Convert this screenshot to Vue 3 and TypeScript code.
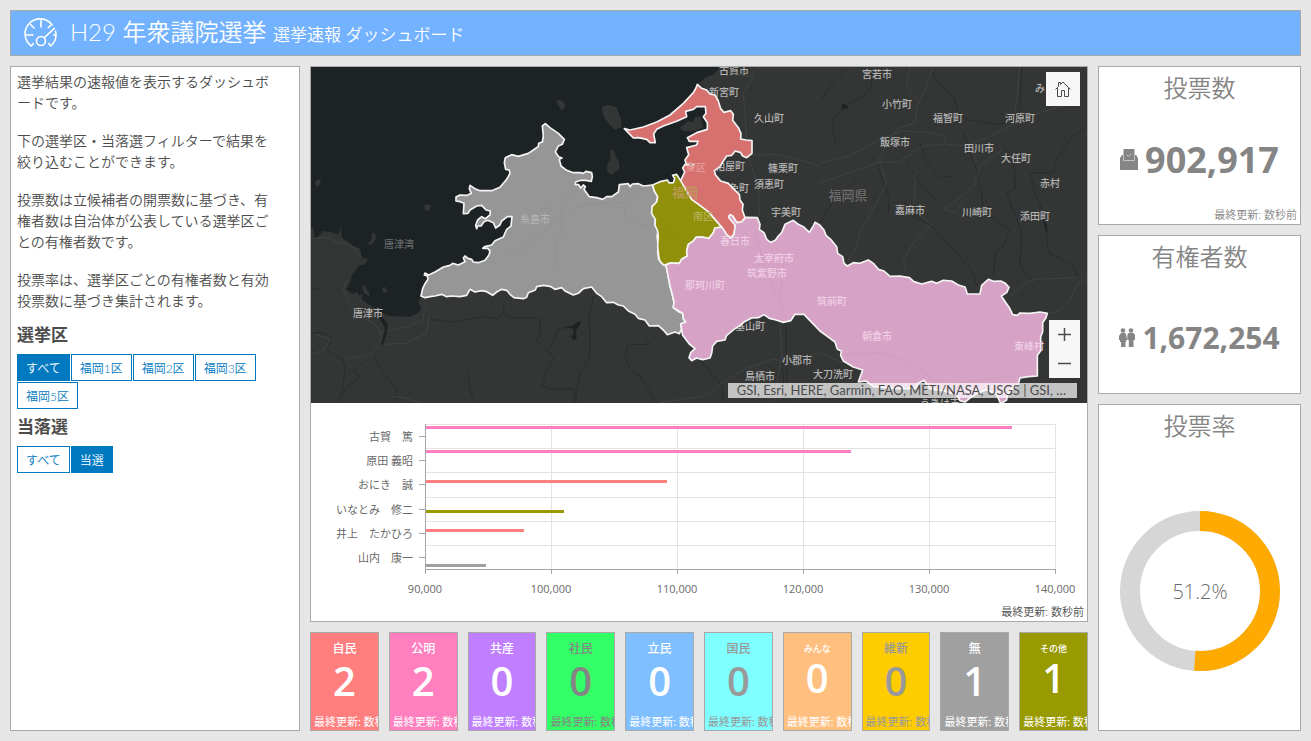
<script setup lang="ts">
import { computed, ref } from 'vue'

interface Candidate { name: string; y: number; barY: number; end: number; color: string }
interface Party { name: string; seats: number; bg: string; fg: string; small?: boolean }
interface Place { name: string; x: number; y: number; kind?: string }

const intro: string[] = [
  '選挙結果の速報値を表示するダッシュボードです。',
  '下の選挙区・当落選フィルターで結果を絞り込むことができます。',
  '投票数は立候補者の開票数に基づき、有権者数は自治体が公表している選挙区ごとの有権者数です。',
  '投票率は、選挙区ごとの有権者数と有効投票数に基づき集計されます。',
]

const districts = ['すべて', '福岡1区', '福岡2区', '福岡3区', '福岡5区']
const results = ['すべて', '当選']
const district = ref('すべて')
const result = ref('当選')
const updated = '最終更新: 数秒前'

const turnout = ref(51.2)
const turnoutDash = computed(() => `${turnout.value} 100`)

const candidates: Candidate[] = [
  { name: '古賀　篤', y: 33, barY: 23, end: 701, color: '#ff7fbf' },
  { name: '原田 義昭', y: 57, barY: 47, end: 540, color: '#ff7fbf' },
  { name: 'おにき　誠', y: 81, barY: 77, end: 356, color: '#ff7f7f' },
  { name: 'いなとみ　修二', y: 106, barY: 107, end: 253, color: '#999900' },
  { name: '井上　たかひろ', y: 130, barY: 126, end: 213, color: '#ff7f7f' },
  { name: '山内　康一', y: 154, barY: 161, end: 175, color: '#a0a0a0' },
]
const rowLines = [21, 45, 69, 94, 118, 142]
const ticks = [
  { x: 114, label: '90,000' },
  { x: 240, label: '100,000' },
  { x: 366, label: '110,000' },
  { x: 492, label: '120,000' },
  { x: 618, label: '130,000' },
  { x: 744, label: '140,000' },
]

const parties: Party[] = [
  { name: '自民', seats: 2, bg: '#ff7f7f', fg: '#ffffff' },
  { name: '公明', seats: 2, bg: '#ff7fbf', fg: '#ffffff' },
  { name: '共産', seats: 0, bg: '#bf7fff', fg: '#ffffff' },
  { name: '社民', seats: 0, bg: '#33ff66', fg: '#858585' },
  { name: '立民', seats: 0, bg: '#7fbfff', fg: '#ffffff' },
  { name: '国民', seats: 0, bg: '#7fffff', fg: '#999999' },
  { name: 'みんな', seats: 0, bg: '#ffbf7f', fg: '#ffffff', small: true },
  { name: '維新', seats: 0, bg: '#ffcc00', fg: '#999999' },
  { name: '無', seats: 1, bg: '#a0a0a0', fg: '#ffffff' },
  { name: 'その他', seats: 1, bg: '#999900', fg: '#ffffff', small: true },
]

const places: Place[] = [
  { name: '糸島市', x: 224, y: 152, kind: 'on-gray' },
  { name: '唐津湾', x: 88, y: 177, kind: 'dim' },
  { name: '唐津市', x: 57, y: 246 },
  { name: '古賀市', x: 423, y: 3 },
  { name: '新宮町', x: 413, y: 25 },
  { name: '久山町', x: 458, y: 51 },
  { name: '粕屋町', x: 419, y: 99 },
  { name: '篠栗町', x: 472, y: 101 },
  { name: '須恵町', x: 458, y: 117 },
  { name: '志免町', x: 423, y: 121 },
  { name: '宇美町', x: 475, y: 145 },
  { name: '宮若市', x: 566, y: 7 },
  { name: '小竹町', x: 586, y: 37 },
  { name: '福智町', x: 637, y: 51 },
  { name: '河原町', x: 709, y: 51 },
  { name: 'み', x: 729, y: 21 },
  { name: '飯塚市', x: 584, y: 75 },
  { name: '田川市', x: 668, y: 81 },
  { name: '大任町', x: 705, y: 91 },
  { name: '赤村', x: 739, y: 116 },
  { name: '福岡県', x: 537, y: 128, kind: 'pref' },
  { name: '嘉麻市', x: 599, y: 143 },
  { name: '川崎町', x: 666, y: 145 },
  { name: '添田町', x: 724, y: 149 },
  { name: '基山町', x: 439, y: 259 },
  { name: '小郡市', x: 486, y: 293 },
  { name: '鳥栖市', x: 449, y: 309 },
  { name: '大刀洗町', x: 522, y: 307 },
  { name: 'うきは市', x: 629, y: 336 },
]
const overlaid: Place[] = [
  { name: '東区', x: 385, y: 100, kind: 'on-red' },
  { name: '福岡', x: 374, y: 125, kind: 'city' },
  { name: '南区', x: 392, y: 149, kind: 'on-olive' },
  { name: '春日市', x: 424, y: 174, kind: 'on-pink' },
  { name: '太宰府市', x: 463, y: 191, kind: 'on-pink' },
  { name: '筑紫野市', x: 456, y: 206, kind: 'on-pink' },
  { name: '那珂川町', x: 394, y: 218, kind: 'on-pink' },
  { name: '筑前町', x: 521, y: 234, kind: 'on-pink' },
  { name: '朝倉市', x: 566, y: 269, kind: 'on-pink' },
  { name: '東峰村', x: 718, y: 279, kind: 'on-pink' },
]

const land =
  'M0 488L10 485 15 520 40 495 60 498 85 505 93 483 96 515 130 540 150 548 155 575 175 580 165 595 145 600 125 630 120 650 108 670 130 685 140 678 150 690 160 680 155 700 175 715 215 740 235 750 300 752 325 740 335 725 325 710 333 690 700 640 900 450 1030 400 1100 370 1150 330 1200 300 1210 100 1165 55 1185 35 1210 25 1232 3H2335V1015H0Z'
const islands = [
  'M738 104L755 103 766 117 760 131 748 124Z',
  'M15 352L20 342 33 341 30 355 20 364Z',
  'M342 420L352 413 363 420 356 435 345 432Z',
  'M186 500L196 503 197 520 184 536 172 535 184 522Z',
  'M157 665L163 654 170 672 179 680 176 690 163 682Z',
  'M216 667L226 662 231 677 222 682Z',
  'M750 106L762 110 765 124 750 132Z',
  'M875 124L895 117 918 122 932 155 935 182 915 192 897 175 880 150Z',
  'M900 254L912 250 917 272 928 290 928 308 905 326 892 318 892 295 902 280Z',
  'M1110 184L1135 165 1150 168 1155 152 1172 152 1180 185 1150 196 1118 196Z',
]
const cove = 'M1192 126L1160 122 1150 130 1127 136 1130 152 1100 166 1040 190 1031 204 1036 230 1060 300 1118 306 1125 295 1130 282 1136 266 1130 245 1160 237 1132 215 1160 200 1192 190Z'
const water = [
  'M205 745L225 762 234 775 230 805 218 838 212 835 224 795 220 775 206 757Z',
  'M765 783L787 780 802 768 815 766 808 780 800 790 798 798 800 818 790 823 782 810 790 806 790 788Z',
  'M1594 120L1600 112 1616 122 1608 130 1604 122 1598 134Z',
  'M2199 462L2210 475 2214 500 2206 490Z',
]
const regions = [
  {
    fill: '#969696',
    d: 'M333 690L338 668 344 655 354 640 352 630 343 627 345 621 356 627 375 618 400 603 420 598 428 592 445 597 465 587 460 576 465 570 474 577 485 580 490 588 505 590 525 583 537 567 540 555 533 547 518 547 524 542 545 537 555 524 580 513 590 490 603 480 606 452 592 452 575 465 570 477 557 486 550 470 533 463 522 467 513 480 503 480 500 488 497 478 503 462 515 452 526 458 540 447 541 435 528 432 515 418 500 420 480 432 474 442 460 443 462 412 450 407 438 405 438 393 450 387 472 388 484 382 478 368 480 358 495 368 510 374 545 374 570 364 590 340 600 322 598 312 587 310 583 290 586 275 605 266 625 271 655 262 670 252 685 241 686 232 697 228 700 210 697 180 706 173 720 185 745 202 763 220 757 235 745 240 736 258 746 272 756 276 748 280 753 300 770 313 790 320 810 320 820 322 828 316 845 320 847 332 844 346 828 343 812 343 797 348 796 356 806 356 812 366 820 357 826 362 822 370 838 392 860 395 878 400 890 392 905 392 925 378 928 356 955 353 960 362 967 354 985 353 1000 360 1028 357 1033 375 1043 392 1040 408 1026 422 1025 442 1036 460 1035 478 1045 492 1041 510 1044 535 1043 560 1046 580 1055 592 1068 600 1075 630 1080 660 1088 690 1092 708 1090 725 1105 737 1118 742 1120 758 1127 768 1112 774 1115 788 1108 803 1095 798 1072 806 1060 792 1045 779 1018 780 1005 762 985 757 975 745 955 735 940 720 925 717 910 709 890 710 875 692 860 682 845 663 820 668 805 682 790 687 765 675 755 665 735 670 720 661 700 658 680 662 676 672 655 680 650 694 640 698 612 695 600 685 590 673 575 670 560 678 548 688 530 677 515 674 495 678 480 670 470 688 450 692 425 690 410 692 395 685 375 690 360 692 345 695Z',
  },
  {
    fill: '#91900a',
    d: 'M1028 357L1050 347 1072 342 1078 351 1090 350 1094 338 1088 328 1100 325 1108 338 1118 350 1130 375 1145 400 1170 418 1195 437 1215 460 1235 483 1215 486 1210 500 1197 517 1175 513 1158 514 1150 525 1135 535 1130 555 1132 570 1115 580 1108 592 1080 591 1062 598 1050 586 1046 570 1043 540 1045 510 1042 492 1035 478 1036 460 1025 442 1026 422 1040 408 1043 392 1033 375Z',
  },
  {
    fill: '#d77170',
    d: 'M943 188L960 192 1000 183 1040 168 1080 147 1120 112 1150 80 1158 66 1162 55 1175 67 1190 72 1200 84 1215 87 1225 105 1232 128 1242 139 1262 134 1270 145 1268 163 1285 185 1293 203 1292 219 1308 222 1326 224 1326 262 1310 275 1298 270 1292 260 1276 255 1265 268 1250 270 1240 285 1230 302 1213 314 1216 326 1232 345 1255 352 1272 370 1288 385 1290 402 1299 415 1297 432 1305 455 1295 468 1280 470 1268 450 1260 446 1256 454 1276 478 1272 505 1262 516 1250 506 1235 483 1215 460 1195 437 1170 418 1145 400 1130 375 1112 344 1124 318 1118 306 1125 295 1148 302 1152 294 1128 292 1125 282 1136 266 1130 245 1160 237 1164 226 1138 226 1132 215 1160 200 1192 190 1192 170 1180 152 1188 142 1186 122 1160 122 1150 130 1127 136 1130 152 1100 166 1060 180 1040 190 1031 204 1036 230 1020 230 1010 220 985 215 970 216Z',
  },
  {
    fill: '#d6a2c5',
    d: 'M1068 598L1080 591 1108 592 1115 580 1132 570 1130 555 1135 535 1150 525 1158 514 1175 513 1197 517 1210 500 1215 486 1235 483 1250 506 1262 516 1272 505 1276 478 1256 454 1260 446 1268 450 1280 470 1295 468 1307 454 1342 455 1350 475 1348 490 1362 500 1370 520 1382 529 1396 523 1405 510 1415 500 1425 475 1450 463 1465 475 1480 482 1498 499 1510 480 1515 469 1530 478 1542 492 1548 508 1562 520 1580 542 1583 562 1598 572 1602 592 1612 600 1630 590 1650 592 1675 582 1690 592 1705 610 1722 615 1740 631 1770 630 1798 635 1812 647 1835 654 1865 646 1880 652 1900 643 1925 645 1945 657 1965 663 1972 684 2010 684 2015 658 2035 640 2050 646 2072 645 2086 652 2097 664 2090 680 2074 690 2086 708 2098 725 2108 746 2122 748 2130 741 2160 742 2190 738 2212 742 2208 755 2198 770 2198 798 2192 812 2192 854 2182 868 2182 930 2155 932 2130 936 2125 953 2105 970 2092 985 2090 1002 2072 1013 2060 985 2030 971 2010 978 1985 992 1965 1008 1950 1004 1940 985 1900 975 1860 968 1842 943 1825 952 1815 968 1760 968 1690 962 1668 945 1645 948 1658 912 1630 903 1600 885 1592 868 1594 855 1582 850 1575 828 1560 817 1530 795 1508 772 1482 745 1455 745 1442 764 1420 769 1398 762 1378 757 1362 746 1345 755 1325 756 1302 768 1290 778 1272 790 1250 808 1245 822 1220 826 1208 840 1205 862 1200 876 1178 881 1160 876 1145 884 1137 875 1142 860 1155 848 1138 834 1118 808 1112 774 1127 768 1120 758 1118 742 1090 725 1092 708 1088 690 1080 660Z',
  },
]
const darkRoads = [
  'M333 700L355 730 365 760 415 768 450 765 520 752 560 757 580 742 583 710M580 742L610 755 690 757 690 800 680 825 733 875 710 915 695 960 730 970 790 968 800 1010',
  'M10 667L40 673M3 800L40 800 65 815 50 850 95 880 105 900 100 960 85 1010M95 985L110 965 150 930 130 915 170 880',
  'M190 865L212 910 260 970 255 1010M473 915L480 970 495 1010M733 875L715 855 745 790 775 783',
  'M850 690L845 720 835 760 840 800 840 870 810 920 795 1010M1005 815L1020 835 955 835 945 870 960 910 990 930 1015 970 1040 1010M1120 810L1170 880 1235 960 1240 1010',
  'M1530 105L1570 50 1620 3M1680 3L1685 60 1660 90 1620 110 1570 160 1570 200 1580 240M1865 20L1895 60 1930 90 1945 140 1970 160 2060 175 2090 168 2130 130 2135 3',
  'M1650 330L1610 370 1560 420 1530 470M1700 290L1735 390 1735 440M1790 290L1830 350 1875 400M1830 230L1850 290 1890 335 1930 330M1960 200L1995 300 2015 380 2020 440 2100 490 2080 540 2055 560 2050 630',
  'M2330 180L2280 220 2240 280 2230 320 2160 320 2175 380 2200 440 2210 500 2215 560 2290 600 2300 630M2080 240L2115 310 2115 370 2090 380 2135 500 2130 600 2160 640',
  'M1780 400L1800 450 1860 475 1930 550 1990 620 2000 660M1415 880L1420 930 1422 1010M1427 770L1430 890 1432 1010',
]
const lightRoads = [
  'M3 518L50 515 85 530 120 535 155 575M110 640L100 670 115 710 140 740 200 780 215 810 212 835 180 865 110 880M212 835L290 832 350 800 360 740 335 700M205 800L300 780 340 760 343 720',
  'M3 865L45 850 60 820 15 805M330 1010L280 995 240 990',
  'M1332 30L1300 80 1305 150 1310 215 1320 290 1345 360 1348 450M1260 3L1290 25 1320 32 1350 3M1215 250L1290 270 1400 265 1500 290 1530 300',
  'M1535 290L1620 270 1720 215 1780 195 1860 200 1900 210 1910 235 1970 240 2030 215 2120 170 2190 140 2290 110',
  'M1530 350L1590 330 1710 288 1765 288 1840 240 1900 235M1710 288L1730 350 1695 420 1650 500 1640 540 1615 585M1870 3L1850 60 1820 120 1815 170 1760 190 1700 290M1800 3L1790 60 1820 100',
  'M1815 320L1815 380 1810 430 1865 475 1810 530 1780 580 1790 620M1960 400L1940 440 1900 430 1930 410 1990 360 2010 300 2080 250M1990 240L1995 290',
  'M2130 3L2115 140M2100 690L2150 650 2180 640 2300 635M1410 770L1415 870 1390 1010M1050 1010L1180 990 1300 910 1390 880 1450 890 1530 860 1600 890',
  'M2215 742L2250 735 2280 700 2300 660 2335 630',
]
const regionRoads = [
  'M580 565L640 545 700 500 760 440 830 415 940 410 1000 375M800 350L755 420 755 500 735 540 745 620M940 410L950 465 1100 505M690 430L720 425 730 440',
  'M1390 520L1420 600 1410 700 1430 770M1330 480L1370 620 1400 700M1530 885L1600 865 1720 860 1820 900 1890 960 2100 930',
]
</script>

<template>
  <div class="dashboard">
    <header class="banner">
      <svg class="banner-icon" viewBox="0 0 34 30" aria-hidden="true">
        <g fill="none" stroke="#fff" stroke-width="1.6" stroke-linecap="round" stroke-linejoin="round">
          <path d="M9.300 25.500L7.300 28A15 15 0 1 1 28.200 7" />
          <path d="M31.500 13.200A15 15 0 0 1 26.700 28L24.700 25.500" />
          <path d="M17 2.500V9M2.500 17H9M6.500 6.500L10 10M26.700 7.300L24.300 9.700M31.500 17H29.500" />
          <path d="M20.500 19.500L30.300 10.300" />
          <circle cx="17" cy="23" r="4.500" />
        </g>
      </svg>
      <h1>H29 年衆議院選挙 <small>選挙速報 ダッシュボード</small></h1>
    </header>

    <main class="layout">
      <aside class="panel sidebar">
        <p v-for="p in intro" :key="p">{{ p }}</p>
        <h2 id="district-label">選挙区</h2>
        <div class="choices" role="group" aria-labelledby="district-label">
          <button
            v-for="d in districts"
            :key="d"
            type="button"
            :class="{ active: d === district }"
            :aria-pressed="d === district"
            @click="district = d"
          >{{ d }}</button>
        </div>
        <h2 id="result-label">当落選</h2>
        <div class="choices" role="group" aria-labelledby="result-label">
          <button
            v-for="r in results"
            :key="r"
            type="button"
            :class="{ active: r === result }"
            :aria-pressed="r === result"
            @click="result = r"
          >{{ r }}</button>
        </div>
      </aside>

      <section class="center">
        <div class="panel visual">
          <div class="map">
            <svg class="map-canvas" viewBox="0 0 776 336" preserveAspectRatio="xMidYMid slice" role="img" aria-label="福岡県の選挙区">
              <rect width="776" height="336" fill="#1d2225" />
              <g transform="scale(.333333) translate(-3 -3)">
                <path :d="land" fill="#343635" />
                <path v-for="d in darkRoads" :key="d" :d="d" class="road dark" />
                <path v-for="d in lightRoads" :key="d" :d="d" class="road light" />
                <path :d="cove" fill="#1d2225" />
                <path v-for="d in islands" :key="d" :d="d" fill="#343635" />
                <path v-for="d in water" :key="d" :d="d" fill="#1d2225" />
              </g>
              <g class="places">
                <text v-for="p in places.slice(3)" :key="p.name" :x="p.x" :y="p.y" :class="p.kind">{{ p.name }}</text>
              </g>
              <g transform="scale(.333333) translate(-3 -3)">
                <path v-for="r in regions" :key="r.fill" :d="r.d" :fill="r.fill" stroke="#f4f4f4" stroke-width="5" stroke-linejoin="round" />
                <path v-for="d in regionRoads" :key="d" :d="d" class="road faint" />
              </g>
              <g class="places">
                <text v-for="p in places.slice(0, 3)" :key="p.name" :x="p.x" :y="p.y" :class="p.kind">{{ p.name }}</text>
                <text v-for="p in overlaid" :key="p.name" :x="p.x" :y="p.y" :class="p.kind">{{ p.name }}</text>
              </g>
            </svg>
            <button type="button" class="map-button home" aria-label="ホーム">
              <svg viewBox="0 0 16 16" aria-hidden="true">
                <path d="M.5 8.500L3.500 5.500V1.500H5.500V3.500L8 1 15.500 8.500M2.500 7V15.500H6.500V9.500H9.500V15.500H13.500V7" fill="none" stroke="#4c4c4c" />
              </svg>
            </button>
            <div class="zoom">
              <button type="button" class="map-button" aria-label="拡大">
                <svg viewBox="0 0 13 13" aria-hidden="true"><path d="M0 6.500H13M6.500 0V13" stroke="#4c4c4c" stroke-width="1.500" /></svg>
              </button>
              <button type="button" class="map-button" aria-label="縮小">
                <svg viewBox="0 0 13 13" aria-hidden="true"><path d="M0 6.500H13" stroke="#4c4c4c" stroke-width="1.500" /></svg>
              </button>
            </div>
            <div class="attribution">GSI, Esri, HERE, Garmin, FAO, METI/NASA, USGS | GSI, …</div>
          </div>

          <svg class="chart" viewBox="0 0 776 200" role="img" aria-label="候補者別の得票数">
            <g stroke="#e3e3e3" shape-rendering="crispEdges">
              <line v-for="y in rowLines" :key="y" x1="114" x2="745" :y1="y + 0.5" :y2="y + 0.5" />
              <line v-for="t in ticks" :key="t.x" :x1="t.x + 0.5" :x2="t.x + 0.5" y1="21" y2="166" />
            </g>
            <rect v-for="c in candidates" :key="c.name" x="114" :y="c.barY" :width="c.end - 114" height="3" :fill="c.color" />
            <g stroke="#a6a6a6" shape-rendering="crispEdges">
              <path d="M114.500 21V171M114 166.500H745" fill="none" />
              <line v-for="c in candidates" :key="c.name" x1="108" x2="114" :y1="c.y + 0.5" :y2="c.y + 0.5" />
              <line v-for="t in ticks" :key="t.x" :x1="t.x + 0.5" :x2="t.x + 0.5" y1="166" y2="171" />
            </g>
            <g class="axis-text">
              <text v-for="c in candidates" :key="c.name" x="102" :y="c.y + 5" text-anchor="end">{{ c.name }}</text>
              <text v-for="t in ticks" :key="t.x" :x="t.x" y="190" text-anchor="middle">{{ t.label }}</text>
            </g>
          </svg>
          <div class="updated">{{ updated }}</div>
        </div>

        <div class="parties">
          <article
            v-for="p in parties"
            :key="p.name"
            class="party"
            :class="{ small: p.small }"
            :style="{ backgroundColor: p.bg, color: p.fg }"
          >
            <h3>{{ p.name }}</h3>
            <strong>{{ p.seats }}</strong>
            <span class="party-updated">{{ updated }}</span>
          </article>
        </div>
      </section>

      <aside class="stats">
        <section class="panel stat">
          <h2>投票数</h2>
          <div class="figure votes">
            <svg width="18" height="22" viewBox="0 0 18 22" aria-hidden="true">
              <path d="M0 9L2 6H16L18 9V21H0Z" fill="#858585" />
              <path d="M3.500 0H14.500V11.500H3.500Z" fill="#858585" />
              <path d="M3.500 6V11.500H14.500V6" fill="none" stroke="#c4c4c4" />
              <path d="M6.500 5.500L8.500 7.500 11.500 4.500" fill="none" stroke="#c4c4c4" />
            </svg>
            <strong>902,917</strong>
          </div>
          <div class="updated">{{ updated }}</div>
        </section>
        <section class="panel stat">
          <h2>有権者数</h2>
          <div class="figure voters">
            <svg width="16" height="20" viewBox="0 0 16 20" fill="#858585" aria-hidden="true">
              <circle cx="4" cy="2.500" r="2.300" />
              <path d="M2 5H6.500L8 10.500V12H7L7.500 14H6.500V19H2V14H1V12H0V8Z" />
              <circle cx="12" cy="2.500" r="2.300" />
              <path d="M9.500 5H14.500L16 7V12H14.500V19H9.800V12H8.300V7Z" />
            </svg>
            <strong>1,672,254</strong>
          </div>
        </section>
        <section class="panel stat turnout">
          <h2>投票率</h2>
          <div class="figure">
            <svg class="gauge" viewBox="0 0 160 160" role="img" aria-label="投票率 51.2%">
              <circle cx="80" cy="80" r="70" fill="none" stroke="#d6d6d6" stroke-width="20" />
              <circle cx="80" cy="80" r="70" fill="none" stroke="#ffaa00" stroke-width="20" pathLength="100" :stroke-dasharray="turnoutDash" transform="rotate(-90 80 80)" />
              <text x="80" y="88" text-anchor="middle">{{ turnout }}%</text>
            </svg>
          </div>
        </section>
      </aside>
    </main>
  </div>
</template>

<style>
body {
  margin: 0;
  background: #e6e6e6;
}
</style>

<style scoped>
.dashboard {
  box-sizing: border-box;
  min-height: 100vh;
  padding: 10px;
  display: flex;
  flex-direction: column;
  gap: 10px;
  background: #e6e6e6;
  color: #4c4c4c;
  font-family: Lato, "Noto Sans CJK JP", sans-serif;
  font-size: 14px;
  font-weight: 400;
}
h1, h2, h3, p {
  margin: 0;
}
button {
  font-family: inherit;
  font-weight: inherit;
  cursor: pointer;
}
.banner {
  box-sizing: border-box;
  height: 46px;
  padding: 0 14px 0 13px;
  display: flex;
  align-items: center;
  gap: 12px;
  border: 1px solid #a9a9a9;
  background: #73b2ff;
  color: #fff;
}
.banner-icon {
  width: 34px;
  height: 30px;
}
.banner h1 {
  font-size: 24px;
  font-weight: 350;
  line-height: 40px;
  white-space: nowrap;
}
.banner small {
  font-size: 17px;
}
.layout {
  flex: 1;
  display: grid;
  grid-template-columns: minmax(0, 290fr) minmax(0, 778fr) minmax(0, 203fr);
  gap: 10px;
}
.panel {
  box-sizing: border-box;
  border: 1px solid #a9a9a9;
  background: #fff;
}
.sidebar {
  padding: 4px 20px 4px 6px;
}
.sidebar p {
  margin-bottom: 17px;
  padding-right: 8px;
  line-height: 21px;
  line-break: anywhere;
  font-weight: 350;
}
.sidebar h2 {
  font-size: 17px;
  font-weight: 700;
  line-height: 25px;
  margin: 5px 0 7px;
}
.sidebar p + h2 {
  margin-top: -6px;
}
.choices {
  display: flex;
  flex-wrap: wrap;
  gap: 1px;
}
.choices button {
  height: 27px;
  padding: 0 8px;
  border: 1px solid #0079c1;
  background: #fff;
  color: #0079c1;
  font-size: 12px;
  font-weight: 350;
}
.choices .active {
  background: #0079c1;
  color: #fff;
}
.center {
  display: flex;
  flex-direction: column;
  gap: 10px;
}
.visual {
  flex: 1;
  display: flex;
  flex-direction: column;
}
.map {
  position: relative;
  flex: 1;
  min-height: 336px;
  overflow: hidden;
}
.map-canvas {
  position: absolute;
  inset: 0;
  width: 100%;
  height: 100%;
}
.road {
  fill: none;
  stroke-width: 3;
  stroke-linejoin: round;
}
.road.dark { stroke: #2a2c2c; }
.road.light { stroke: #404242; }
.road.faint { stroke: #000; stroke-opacity: .035; }
.places text {
  fill: #b4b4b4;
  font-size: 10px;
  font-weight: 500;
  text-anchor: middle;
  dominant-baseline: central;
}
.places .dim { fill: #666a6c; }
.places .pref { fill: #6b6b6b; font-size: 13px; }
.places .on-gray { fill: #b5b5b5; }
.places .on-red { fill: #e69a98; }
.places .on-olive { fill: #b5b158; }
.places .city { fill: #bd9b58; font-size: 13px; }
.places .on-pink { fill: #f0cfe5; }
.map-button {
  display: flex;
  align-items: center;
  justify-content: center;
  padding: 0;
  border: 0;
  background: #f7f7f7;
}
.home {
  position: absolute;
  top: 5px;
  right: 7px;
  width: 34px;
  height: 34px;
}
.home svg {
  width: 16px;
  height: 16px;
}
.zoom {
  position: absolute;
  right: 7px;
  bottom: 25px;
  width: 31px;
}
.zoom .map-button {
  width: 31px;
  height: 29px;
}
.zoom svg {
  width: 13px;
  height: 13px;
}
.attribution {
  position: absolute;
  right: 10px;
  bottom: 5px;
  padding: 0 11px 0 9px;
  background: rgba(255, 255, 255, .7);
  font-size: 13px;
  line-height: 15px;
  white-space: nowrap;
}
.chart {
  display: block;
  width: 100%;
}
.axis-text text {
  fill: #6a6a6a;
  font-family: "Open Sans", "Noto Sans CJK JP", sans-serif;
  font-size: 11px;
  font-weight: 400;
}
.updated {
  padding: 0 3px 0 0;
  font-size: 11px;
  font-weight: 350;
  line-height: 18px;
  text-align: right;
  white-space: nowrap;
}
.parties {
  display: grid;
  grid-template-columns: repeat(10, minmax(0, 1fr));
  gap: 10px;
}
.party {
  box-sizing: border-box;
  height: 99px;
  padding: 6px 0 0;
  display: flex;
  flex-direction: column;
  border: 1px solid #a9a9a9;
  text-align: center;
  overflow: hidden;
}
.party h3 {
  font-size: 12px;
  font-weight: 500;
  line-height: 20px;
}
.party strong {
  font-family: "Open Sans", sans-serif;
  font-size: 40px;
  font-weight: 600;
  line-height: 44px;
}
.party-updated {
  margin-top: auto;
  padding-left: 3px;
  font-size: 11px;
  font-weight: 400;
  line-height: 16px;
  text-align: left;
  white-space: nowrap;
}
.party.small h3 {
  font-size: 9px;
}
.party.small strong {
  line-height: 38px;
}
.stats {
  display: grid;
  grid-template-rows: 159fr 159fr 327fr;
  gap: 10px;
  color: #858585;
}
.stat {
  display: flex;
  flex-direction: column;
  padding-top: 3px;
}
.stat h2 {
  font-size: 24px;
  font-weight: 350;
  line-height: 36px;
  text-align: center;
}
.figure {
  flex: 1;
  display: flex;
  align-items: center;
  justify-content: center;
  gap: 7px;
  padding-top: 8px;
}
.figure strong {
  font-family: "Open Sans", sans-serif;
  font-weight: 700;
  line-height: 40px;
}
.votes strong { font-size: 36px; }
.voters strong { font-size: 30px; }
.gauge {
  width: 80%;
  max-width: 160px;
}
.gauge text {
  fill: #6a6a6a;
  font-family: "Open Sans", sans-serif;
  font-size: 20px;
  font-weight: 300;
}
</style>
